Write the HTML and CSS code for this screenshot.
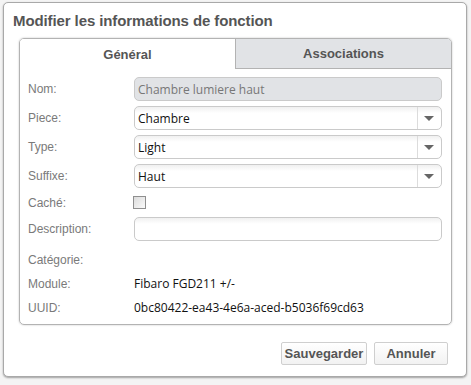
FILE: index.html
```html
<!DOCTYPE html>
<html lang="fr">
<head>
<meta charset="utf-8">
<link rel="stylesheet" href="styles.css">
</head>
<body>
<div class="dialog">
  <div class="title">Modifier les informations de fonction</div>
  <div class="panel">
    <div class="tabs">
      <div class="tab active">Général</div>
      <div class="tab">Associations</div>
    </div>
    <div class="form">
      <div class="row"><div class="label">Nom:</div><div class="input disabled">Chambre lumiere haut</div></div>
      <div class="row"><div class="label">Piece:</div><div class="input select"><span class="val">Chambre</span><span class="arrow"></span></div></div>
      <div class="row"><div class="label">Type:</div><div class="input select"><span class="val">Light</span><span class="arrow"></span></div></div>
      <div class="row"><div class="label">Suffixe:</div><div class="input select"><span class="val">Haut</span><span class="arrow"></span></div></div>
      <div class="row short"><div class="label">Caché:</div><div class="check"></div></div>
      <div class="row"><div class="label">Description:</div><div class="input"></div></div>
      <div class="row text cat"><div class="label">Catégorie:</div><div class="value"></div></div>
      <div class="row text"><div class="label">Module:</div><div class="value">Fibaro FGD211 +/-</div></div>
      <div class="row text"><div class="label">UUID:</div><div class="value">0bc80422-ea43-4e6a-aced-b5036f69cd63</div></div>
    </div>
  </div>
  <div class="buttons">
    <div class="btn save">Sauvegarder</div>
    <div class="btn cancel">Annuler</div>
  </div>
</div>
</body>
</html>
```

FILE: styles.css
```css
html, body {
  margin: 0;
  padding: 0;
}
body {
  width: 471px;
  height: 385px;
  background: #f4f4f4;
  padding: 2px 0 0 3px;
  box-sizing: border-box;
  font-family: "Liberation Sans", Arial, sans-serif;
  overflow: hidden;
}
.dialog {
  width: 464px;
  height: 375px;
  box-sizing: border-box;
  background: #fff;
  border: 1px solid #a9a9a9;
  border-radius: 5px;
  box-shadow: 0 1px 2px rgba(0,0,0,0.35);
  display: flex;
  flex-direction: column;
}
.title {
  font-weight: bold;
  font-size: 15px;
  letter-spacing: -0.1px;
  color: #555;
  padding: 9px 0 0 9px;
  height: 26px;
  box-sizing: border-box;
}
.panel {
  margin: 9px 14px 0 15px;
  height: 287px;
  box-sizing: border-box;
  border: 1px solid #b3b3b3;
  border-radius: 5px;
  box-shadow: 0 0 2px rgba(0,0,0,0.25);
  display: flex;
  flex-direction: column;
  overflow: hidden;
}
.tabs {
  display: flex;
  height: 30px;
}
.tab {
  flex: 1;
  display: flex;
  align-items: center;
  justify-content: center;
  font-weight: bold;
  font-size: 13px;
  color: #555;
  background: #e1e3e6;
  border-left: 1px solid #b3b3b3;
  border-bottom: 1px solid #b3b3b3;
}
.tab.active {
  background: #fff;
  border: none;
}
.form {
  padding: 8px 8px 0 8px;
  display: flex;
  flex-direction: column;
  gap: 5px;
}
.row {
  display: flex;
  align-items: center;
  height: 24px;
}
.row.short {
  height: 19px;
}
.row.text {
  height: 19px;
}
.row.cat {
  margin-top: 4px;
}
.label {
  width: 106px;
  flex: none;
  font-size: 12px;
  color: #7a7a7a;
}
.input {
  width: 308px;
  height: 24px;
  box-sizing: border-box;
  border: 1px solid #cacaca;
  border-radius: 5px;
  background: linear-gradient(#f0f0f0, #fff 6px);
  font-family: "Open Sans", "Noto Sans", sans-serif;
  font-size: 12px;
  color: #111;
  display: flex;
  align-items: center;
  padding-left: 3px;
}
.input.disabled {
  background: #e1e3e6;
  color: #777;
}
.select {
  padding-left: 0;
}
.select .val {
  flex: 1;
  padding-left: 3px;
  border-right: 1px solid #dcdcdc;
  height: 100%;
  display: flex;
  align-items: center;
}
.arrow {
  width: 23px;
  height: 100%;
  position: relative;
}
.arrow::after {
  content: "";
  position: absolute;
  left: 6px;
  top: 9px;
  border-left: 5px solid transparent;
  border-right: 5px solid transparent;
  border-top: 5px solid #666;
}
.check {
  width: 13px;
  height: 13px;
  box-sizing: border-box;
  border: 1px solid #8f8f8f;
  background: linear-gradient(135deg, #dcdcdc, #fafafa);
  margin-left: -1px;
}
.value {
  font-family: "Open Sans", "Noto Sans", sans-serif;
  font-size: 12px;
  color: #111;
}
.buttons {
  display: flex;
  justify-content: flex-end;
  gap: 7px;
  padding: 17px 18px 0 0;
}
.btn {
  height: 23px;
  box-sizing: border-box;
  border: 1px solid #cfcfcf;
  border-radius: 2px;
  background: linear-gradient(#fff, #f2f2f2);
  font-weight: bold;
  font-size: 13px;
  color: #555;
  display: flex;
  align-items: center;
  justify-content: center;
}
.btn.save {
  width: 86px;
}
.btn.cancel {
  width: 74px;
}
```
